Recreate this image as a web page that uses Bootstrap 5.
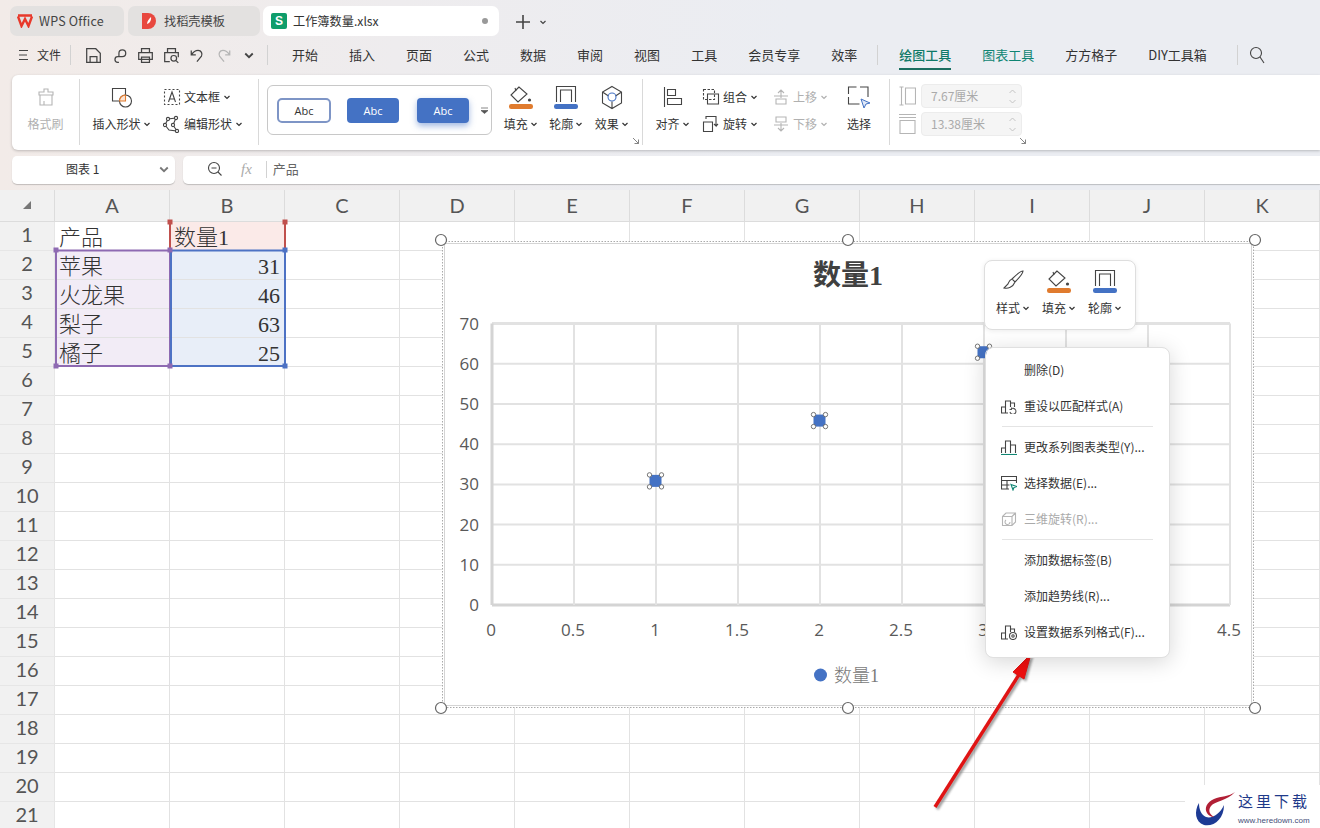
<!DOCTYPE html>
<html lang="zh-CN">
<head>
    <meta charset="UTF-8">
    <title>工作簿数量.xlsx</title>
    <link href="https://cdn.jsdelivr.net/npm/bootstrap@5.3.0/dist/css/bootstrap.min.css" rel="stylesheet">
    <style>
        html, body { height: 828px; overflow: hidden; }
        body {
            width: 1320px;
            font-family: "Noto Sans CJK SC", "Liberation Sans", sans-serif;
            font-size: 12px;
            color: #333;
            background: linear-gradient(90deg, #f2ebe8 0%, #eeecee 30%, #ebedf2 60%, #ebedf2 100%);
        }
        svg { display: block; flex: none; }
        .ic { fill: none; stroke: #444; stroke-width: 1.1; }
        .ic-off { fill: none; stroke: #b5b5b5; stroke-width: 1.1; }

        /* title tabs */
        .tabbar { height: 38px; padding: 6px 0 0 10px; }
        .wtab { height: 30px; border-radius: 7px; background: #e3e1e0; margin-right: 4px; font-size: 12.2px; color: #444; padding-left: 7px; }
        .wtab-a { width: 114px; font-size: 12.5px; letter-spacing: .2px; }
        .wtab-a span { margin-left: 2px; }
        .wtab-b { width: 132px; padding-left: 14px; }
        .wtab-c { width: 236px; background: #fff; color: #333; margin-left: -1px; padding: 0 8px 0 8px; }
        .wtab-c > span { margin-left: 2px; }
        .sheet-badge { width: 16px; height: 16px; border-radius: 2px; background: #0f9d6b; color: #fff; font-size: 12px; font-weight: 700; line-height: 16px; text-align: center; font-family: "Liberation Sans", sans-serif; }
        .tab-dot { width: 6px; height: 6px; border-radius: 50%; background: #999; margin-left: auto; margin-right: 3px; }
        .tab-add { margin-left: 12px; }

        /* menu row */
        .menubar { height: 37px; padding: 0 0 3px 18px; font-size: 13px; color: #333; }
        .vbar { width: 1px; height: 20px; background: #d2d2d2; flex: none; }
        .quick { width: 26px; display: flex; justify-content: center; }
        .quick svg { width: 17px; height: 17px; }
        .quick svg.quick-chev { width: 12px; height: 12px; color: #444; }
        .mtab { margin-right: 31px; position: relative; white-space: nowrap; }
        .mtab-on { color: #0f7a68; font-weight: 500; }
        .mtab-on::after { content: ""; position: absolute; left: 0; right: 0; bottom: -5px; height: 2px; background: #1a6e5f; }
        .mtab-tool { color: #0f8573; }

        /* ribbon */
        .ribbon { height: 75px; margin-left: 12px; padding: 4px 0; background: #fff; border-radius: 6px 0 0 6px; box-shadow: 0 1px 3px rgba(0, 0, 0, .22); }
        .rgroup { height: 66px; padding-top: 5px; border-right: 1px solid #d9d9d9; position: relative; flex: none; }
        .rgroup-1 { width: 68px; }
        .rgroup-2 { width: 179px; }
        .rgroup-4 { width: 145px; margin-left: 6px; }
        .rgroup-5 { width: 247px; }
        .stack { display: flex; flex-direction: column; align-items: center; flex: none; }
        .stack > div { height: 27px; display: flex; align-items: center; justify-content: center; gap: 2px; white-space: nowrap; }
        .stack > div:first-child { height: 26px; }
        .rrow { height: 27px; display: flex; align-items: center; gap: 3px; white-space: nowrap; }
        .rrows { margin-top: -1px; }
        .off-text { color: #b0b0b0; }
        .launcher { position: absolute; right: 2px; bottom: 0; }
        .launcher-size { right: auto; left: 129px; }
        .gallery { width: 225px; height: 50px; margin: 6px 0 0 8px; border: 1px solid #c8c8c8; border-radius: 6px; padding-left: 9px; flex: none; position: relative; }
        .gbtn { height: 25px; border-radius: 4px; font-size: 11px; line-height: 23px; text-align: center; font-family: "Open Sans", sans-serif; }
        .gbtn-1 { width: 54px; border: 2px solid #7e95c6; line-height: 21px; color: #333; background: #fff; margin-right: 16px; border-radius: 5px; }
        .gbtn-2 { width: 52px; line-height: 25px; background: #4472c4; color: #fff; margin-right: 18px; }
        .gbtn-3 { width: 52px; line-height: 25px; background: #4472c4; color: #fff; box-shadow: 0 3px 6px rgba(68, 114, 196, .5); }
        .gal-more { position: absolute; right: 2px; top: 20px; }
        .sizegroup { width: 140px; padding: 5px 0 0 9px; border: 0; }
        .sizerow { height: 24px; }
        .numbox { width: 101px; height: 24px; margin-left: 5px; background: #f5f5f5; border: 1px solid #ececec; border-radius: 4px; padding: 0 3px 0 9px; color: #aaa; font-size: 12px; flex: none; }

        /* formula row */
        .fbar { height: 40px; padding: 6px 0 0 12px; }
        .namebox { width: 163px; height: 28px; background: #fff; border-radius: 5px; box-shadow: 0 1px 1px rgba(0, 0, 0, .2); margin-right: 8px; padding: 0 5px 2px 54px; }
        .formula { flex: 1; height: 28px; background: #fff; border-radius: 5px 0 0 5px; box-shadow: 0 1px 1px rgba(0, 0, 0, .2); color: #666; font-size: 13px; padding: 0 0 2px 24px; }
        .fx { font-family: "Liberation Serif", serif; font-style: italic; color: #aaa; font-size: 15px; margin: 0 5px 0 18px; }
        .fx-bar { height: 17px; margin: 0 6px 0 9px; }

        /* grid */
        .sheet { position: relative; height: 638px; background: #fff; overflow: hidden; }
        .grid-table { table-layout: fixed; width: 1320px; margin-left: -1px; border-collapse: collapse; }
        .grid-table th, .grid-table td { border: 1px solid #e2e2e2; padding: 0; overflow: hidden; white-space: nowrap; }
        .grid-table thead th { height: 31px; background: #f1f1f1; border-color: #dcdcdc; border-top: 0; text-align: center; font: 400 20px "Lato", sans-serif; color: #555; }
        .grid-table tbody th { height: 29px; padding-bottom: 4px; background: #f1f1f1; border-color: #e6e6e6; text-align: center; font: 400 20px "Lato", sans-serif; color: #555; }
        .grid-table td { font-family: "Liberation Serif", "Noto Sans CJK SC", serif; font-size: 22px; font-weight: 300; line-height: 25px; color: #333; padding: 3px 4px 0; }
        .cell-a { background: #f2ecf6; }
        .cell-b { background: #e8eef8; }
        .cell-h { background: #fbeae8; }
        .overlay { position: absolute; left: 0; top: 0; }

        /* floating bar and menu */
        .minibar { position: absolute; left: 984px; top: 70px; width: 152px; height: 70px; background: #fff; border: 1px solid #dedede; border-radius: 8px; box-shadow: 0 1px 5px rgba(0, 0, 0, .08); padding: 6px 5px 0; }
        .minibar .stack { width: 46px; }
        .minibar .stack > div:first-child { height: 28px; }
        .minibar .stack > div:last-child { height: 26px; }
        .ctx.dropdown-menu { position: absolute; left: 985px; top: 157px; width: 185px; height: 311px; padding: 4px 0 0; border: 1px solid #e0e0e0; border-radius: 8px; box-shadow: 0 4px 22px rgba(0, 0, 0, .16); font-size: 12px; display: block; }
        .ctx .dropdown-item { height: 36.3px; padding: 0 0 0 15px; display: flex; align-items: center; gap: 7px; color: #333; font-size: 12px; white-space: nowrap; }
        .ctx .dropdown-item.disabled { color: #aaa; }
        .ctx .dropdown-divider { margin: 1.5px 16px 1.5px 16px; border-color: #e4e4e4; height: 1px; }
        .ico-slot { width: 16px; height: 16px; flex: none; }
        .mark-white { position: absolute; left: 1185px; top: 595px; width: 135px; height: 43px; background: #fff; }
        .mark-name { position: absolute; left: 1238px; top: 602px; font-size: 15px; letter-spacing: 3px; line-height: 18px; color: #1f3a8a; white-space: nowrap; }
        .mark-url { position: absolute; left: 1238px; top: 625px; font: 8px/11px "Liberation Sans", sans-serif; color: #444e78; white-space: nowrap; }
    </style>
</head>
<body>
    <svg width="0" height="0" class="position-absolute">
        <symbol id="chev" viewBox="0 0 8 8"><path d="M1.5 3 4 5.5 6.5 3" fill="none" stroke="currentColor" stroke-width="1.2"/></symbol>
        <symbol id="corner" viewBox="0 0 8 8"><path d="M1 1 6.5 6.5M6.5 2.500v4h-4" fill="none" stroke="#777" stroke-width=".9"/></symbol>
        <symbol id="fill" viewBox="0 0 26 25"><g fill="none" stroke="#444" stroke-width="1.1"><path d="M11 2 3 10l7 7 9-8z"/><path d="M8 6l-1-3"/></g><circle cx="21.5" cy="15" r="1.6" fill="#444"/><rect x="1" y="19" width="24" height="5" rx="2.2" fill="#e07b2e"/></symbol>
        <symbol id="line" viewBox="0 0 26 25"><g fill="none" stroke="#444" stroke-width="1.1"><path d="M3.500 17V1.500h19V17"/><path d="M7.500 17V5h11v12"/></g><rect x="1" y="19" width="24" height="5" rx="2.2" fill="#4472c4"/></symbol>
    </svg>

    <div class="tabbar d-flex">
        <div class="wtab wtab-a d-flex align-items-center gap-1">
            <svg width="16" height="14" viewBox="0 0 16 14"><path d="M1 2.500 4.500 12 8 5l3.500 7L15 2.500M1 1.500h14" fill="none" stroke="#e8392b" stroke-width="2.400"/></svg>
            <span>WPS Office</span>
        </div>
        <div class="wtab wtab-b d-flex align-items-center gap-2">
            <svg width="14" height="16" viewBox="0 0 14 16"><path d="M0 0h6a8 8 0 0 1 0 16H0z" fill="#e8483f"/><path d="M5 11c0-3 2-5 4-7 .5 3-1 6-4 7z" fill="#fff"/></svg>
            <span>找稻壳模板</span>
        </div>
        <div class="wtab wtab-c d-flex align-items-center gap-1">
            <div class="sheet-badge">S</div>
            <span>工作簿数量.xlsx</span>
            <div class="tab-dot"></div>
        </div>
        <div class="tab-add d-flex align-items-center" style="color:#444">
            <svg width="16" height="16" viewBox="0 0 16 16"><path d="M8 1v14M1 8h14" stroke="#444" stroke-width="1.600"/></svg>
            <svg class="ms-2" width="8" height="8"><use href="#chev"/></svg>
        </div>
    </div>

    <div class="menubar d-flex align-items-center">
        <svg width="11" height="12" viewBox="0 0 11 12" class="me-1"><path d="M1 1.500h9M1 6h8M1 10.500h9" stroke="#444"/></svg>
        <span class="ms-1" style="font-size:12px">文件</span>
        <div class="vbar" style="margin:0 9px 0 9px"></div>
        <div class="quick"><svg class="ic" viewBox="0 0 15 15"><path d="M1.500 1.500h8l4 4v8h-12zM4.500 13.500v-5h6v5"/></svg></div>
        <div class="quick"><svg class="ic" viewBox="0 0 15 15"><path d="M7 8V5.500a3 3 0 1 1 3 3H6a2.500 2.500 0 1 0 0 5h1"/></svg></div>
        <div class="quick"><svg class="ic" viewBox="0 0 15 15"><path d="M4 5V1.500h7V5M1.500 11V5h12v6zM4 9h7v4.500H4z"/></svg></div>
        <div class="quick"><svg class="ic" viewBox="0 0 15 15"><path d="M4 5V1.500h7V5M6 13H1.500V5h12v4"/><circle cx="9.500" cy="10" r="2.500"/><path d="M11.500 12l2 2"/></svg></div>
        <div class="quick"><svg class="ic" viewBox="0 0 15 15"><path d="M2 3v4h4M2 7c2-3 4-4 6-4 3 0 4 3 3 5l-4 5"/></svg></div>
        <div class="quick"><svg class="ic-off" viewBox="0 0 15 15"><path d="M13 3v4H9M13 7c-2-3-4-4-6-4-3 0-4 3-3 5l4 5"/></svg></div>
        <div class="quick"><svg class="quick-chev"><use href="#chev"/></svg></div>
        <div class="vbar" style="margin:0 24px 0 5px"></div>
        <span class="mtab">开始</span><span class="mtab">插入</span><span class="mtab">页面</span><span class="mtab">公式</span><span class="mtab">数据</span><span class="mtab">审阅</span><span class="mtab">视图</span><span class="mtab">工具</span><span class="mtab">会员专享</span><span class="mtab" style="margin-right:20px">效率</span>
        <div class="vbar" style="margin-right:21px"></div>
        <span class="mtab mtab-on">绘图工具</span><span class="mtab mtab-tool">图表工具</span><span class="mtab">方方格子</span><span class="mtab" style="margin-right:30px">DIY工具箱</span>
        <div class="vbar" style="margin-right:11px"></div>
        <svg class="ic" width="16" height="18" viewBox="0 0 16 18"><circle cx="7" cy="7" r="5.500"/><path d="M11 11l4 6"/></svg>
    </div>

    <div class="ribbon d-flex">
        <div class="rgroup rgroup-1 stack">
            <div><svg class="ic-off" width="20" height="20" viewBox="0 0 20 20"><path d="M8 5V2h4v3h5v3H3V5zM4 8v10h12V8M8 18v-4"/></svg></div>
            <div class="off-text">格式刷</div>
        </div>
        <div class="rgroup rgroup-2 d-flex">
            <div class="stack" style="width:83px">
                <div><svg class="ic" width="22" height="21" viewBox="0 0 22 21"><path d="M8.500 14H1.500V1.500h13V8"/><circle cx="14.500" cy="14" r="6"/><path d="M8.500 14a6 6 0 0 1 6-6v6z" fill="#fbe3d3" stroke="#e07b2e"/></svg></div>
                <div>插入形状<svg width="8" height="8"><use href="#chev"/></svg></div>
            </div>
            <div class="rrows">
                <div class="rrow"><svg class="ic" width="18" height="18" viewBox="0 0 18 18"><path stroke-dasharray="2 2" d="M1.500 1.500h15v15h-15z"/><path d="M5.500 14 9 4l3.500 10M6.500 11h5"/></svg>文本框 <svg width="8" height="8"><use href="#chev"/></svg></div>
                <div class="rrow"><svg class="ic" width="18" height="18" viewBox="0 0 18 18"><path d="M13 3 5 4 2 10l4 5 8 1-4-6z"/><circle cx="13" cy="3" r="1.600" fill="#fff"/><circle cx="5" cy="4" r="1.600" fill="#fff"/><circle cx="2" cy="10" r="1.600" fill="#fff"/><circle cx="14" cy="16" r="1.600" fill="#fff"/><circle cx="10" cy="10" r="1.600" fill="#fff"/></svg>编辑形状 <svg width="8" height="8"><use href="#chev"/></svg></div>
            </div>
        </div>
        <div class="gallery d-flex align-items-center">
            <div class="gbtn gbtn-1">Abc</div>
            <div class="gbtn gbtn-2">Abc</div>
            <div class="gbtn gbtn-3">Abc</div>
            <svg class="gal-more" width="9" height="9" viewBox="0 0 9 9"><path d="M1 2h7M1 4.500l3.500 3 3.500-3z" fill="#555" stroke="#555" stroke-width=".7"/></svg>
        </div>
        <div class="rgroup rgroup-4 d-flex">
            <div class="stack" style="width:45.500px">
                <div><svg width="26" height="25"><use href="#fill"/></svg></div>
                <div>填充<svg width="8" height="8"><use href="#chev"/></svg></div>
            </div>
            <div class="stack" style="width:45.500px">
                <div><svg width="26" height="25"><use href="#line"/></svg></div>
                <div>轮廓<svg width="8" height="8"><use href="#chev"/></svg></div>
            </div>
            <div class="stack" style="width:45.500px">
                <div><svg class="ic" width="22" height="25" viewBox="0 0 22 25"><path d="M11 1.500 20.500 7v11L11 23.500 1.500 18V7zM1.500 7l6 4M20.500 7l-6 4M11 16.500v7"/><circle cx="11" cy="12" r="4" stroke="#4472c4"/></svg></div>
                <div>效果<svg width="8" height="8"><use href="#chev"/></svg></div>
            </div>
            <svg class="launcher" width="8" height="8"><use href="#corner"/></svg>
        </div>
        <div class="rgroup rgroup-5 d-flex">
            <div class="stack" style="width:59px">
                <div><svg class="ic" width="20" height="20" viewBox="0 0 20 20"><path d="M1.500 0v20M4.500 2.500h8v6h-8zM4.500 11.500h14v6h-14z"/></svg></div>
                <div>对齐<svg width="8" height="8"><use href="#chev"/></svg></div>
            </div>
            <div class="rrows" style="width:70px">
                <div class="rrow"><svg class="ic" width="18" height="18" viewBox="0 0 18 18"><path stroke-dasharray="2.500 1.500" d="M1.500 1.500h11v10h-11z"/><path d="M5.500 6h11v10h-11z"/></svg>组合 <svg width="8" height="8"><use href="#chev"/></svg></div>
                <div class="rrow"><svg class="ic" width="18" height="18" viewBox="0 0 18 18"><path d="M1.500 7h9v9.500h-9zM4 4V1.500h10V11l-2-2m2 2 2-2"/></svg>旋转 <svg width="8" height="8"><use href="#chev"/></svg></div>
            </div>
            <div class="rrows off-text" style="width:67px">
                <div class="rrow"><svg class="ic-off" width="18" height="18" viewBox="0 0 18 18"><path d="M2 8h14M4 11h10v5H4zM9 10V2M6 5l3-3 3 3"/></svg>上移 <svg width="8" height="8"><use href="#chev"/></svg></div>
                <div class="rrow"><svg class="ic-off" width="18" height="18" viewBox="0 0 18 18"><path d="M2 10h14M4 2h10v5H4zM9 8v8M6 13l3 3 3-3"/></svg>下移 <svg width="8" height="8"><use href="#chev"/></svg></div>
            </div>
            <div class="stack" style="width:40px">
                <div><svg width="24" height="25" viewBox="0 0 24 25"><g fill="none" stroke="#444" stroke-width="1.100"><path d="M1.500 9V2h8M13 2h8v10M1.500 12v7h11"/></g><path d="M14 14 23 18l-4 1-2 4z" fill="#dfe8f8" stroke="#4472c4"/></svg></div>
                <div>选择</div>
            </div>
        </div>
        <div class="rgroup sizegroup">
            <div class="sizerow d-flex align-items-center mb-1">
                <svg class="ic-off" width="17" height="20" viewBox="0 0 17 20"><path d="M.5 1h4M.5 19h4M2.500 1v18M6.500 2h10v16h-10z"/></svg>
                <div class="numbox d-flex align-items-center justify-content-between"><span>7.67厘米</span><svg width="11" height="17" viewBox="0 0 11 17"><path d="M2.500 5 5.500 2l3 3M2.500 12l3 3 3-3" fill="none" stroke="#c5c5c5"/></svg></div>
            </div>
            <div class="sizerow d-flex align-items-center">
                <svg class="ic-off" width="17" height="20" viewBox="0 0 17 20"><path d="M0 .5h17M0 3.500h17M1 6.500h15v13H1z"/></svg>
                <div class="numbox d-flex align-items-center justify-content-between"><span>13.38厘米</span><svg width="11" height="17" viewBox="0 0 11 17"><path d="M2.500 5 5.500 2l3 3M2.500 12l3 3 3-3" fill="none" stroke="#c5c5c5"/></svg></div>
            </div>
            <svg class="launcher launcher-size" width="8" height="8"><use href="#corner"/></svg>
        </div>
    </div>

    <div class="fbar d-flex">
        <div class="namebox d-flex align-items-center justify-content-between">
            <span>图表 1</span>
            <svg width="12" height="12" style="color:#777"><use href="#chev"/></svg>
        </div>
        <div class="formula d-flex align-items-center">
            <svg class="ic" width="16" height="16" viewBox="0 0 16 16"><circle cx="7" cy="7" r="5.500"/><path d="M4.500 7h5M11 11l3.500 3.500"/></svg>
            <span class="fx">fx</span>
            <div class="vbar fx-bar"></div>
            <span>产品</span>
        </div>
    </div>

    <div class="sheet">
        <table class="grid-table">
            <colgroup id="gridCols"></colgroup>
            <thead><tr id="gridHead"></tr></thead>
            <tbody id="gridBody"></tbody>
        </table>

        <svg class="overlay" width="1320" height="638" viewBox="0 190 1320 638" id="chartLayer">
            <!-- data range frames -->
            <g fill="none" stroke-width="2">
                <path d="M170 222v28M285 222v28" stroke="#c0504d"/>
                <path d="M56 250.500H170V366H56z" stroke="#8e6ab2"/>
                <path d="M171 250.500H285V366H171z" stroke="#4d72c4"/>
            </g>
            <g id="rangeHandles"></g>
            <!-- chart -->
            <rect x="442.500" y="241.500" width="811" height="466" fill="#fff" stroke="#aaa" stroke-dasharray="1.500 1.500"/>
            <rect x="444.500" y="243.500" width="807" height="462" fill="#fff" stroke="#d4d4d4"/>
            <text x="848" y="285" text-anchor="middle" font-family="Liberation Serif, Noto Sans CJK SC, serif" font-size="28" font-weight="700" fill="#404040">数量1</text>
            <g id="chartGrid"></g>
            <g id="chartPoints"></g>
            <circle cx="820.500" cy="675" r="6.500" fill="#4472c4"/>
            <text x="834" y="682" font-family="Liberation Serif, Noto Sans CJK SC, serif" font-size="18" font-weight="300" fill="#7a7a7a">数量1</text>
            <g fill="#fff" stroke="#666" stroke-width="1.200">
                <circle cx="441" cy="240" r="5.500"/><circle cx="848" cy="240" r="5.500"/><circle cx="1255" cy="240" r="5.500"/>
                <circle cx="441" cy="708" r="5.500"/><circle cx="848" cy="708" r="5.500"/><circle cx="1255" cy="708" r="5.500"/>
            </g>
        </svg>

        <div class="minibar d-flex">
            <div class="stack">
                <div><svg class="ic" width="24" height="24" viewBox="0 0 24 24"><path d="M22 2c-2 0-8 5-11 8l3 3c3-3 8-9 8-11zM11 10c-3 1-3 3-4 5l-4 4c4 1 9-1 11-6"/></svg></div>
                <div>样式<svg width="8" height="8"><use href="#chev"/></svg></div>
            </div>
            <div class="stack">
                <div><svg width="26" height="25"><use href="#fill"/></svg></div>
                <div>填充<svg width="8" height="8"><use href="#chev"/></svg></div>
            </div>
            <div class="stack">
                <div><svg width="26" height="25"><use href="#line"/></svg></div>
                <div>轮廓<svg width="8" height="8"><use href="#chev"/></svg></div>
            </div>
        </div>

        <div class="ctx dropdown-menu">
            <a class="dropdown-item" href="#"><span class="ico-slot"></span>删除(D)</a>
            <a class="dropdown-item" href="#"><svg class="ic ico-slot" viewBox="0 0 16 16"><path d="M.5 15V9h4v6zM4.500 9V3h5v6M9.500 5h4v4M.5 15H7"/><path d="M9 14a3 3 0 1 0 1-3M10.500 9.500v2h-2" stroke="#555"/></svg>重设以匹配样式(A)</a>
            <div class="dropdown-divider"></div>
            <a class="dropdown-item" href="#"><svg class="ic ico-slot" viewBox="0 0 16 16"><path d="M.5 14V9h4v5M4.500 14V2h5v12M9.500 14V6h5v8"/><path d="M0 15.500h16" stroke="#0f8573"/></svg>更改系列图表类型(Y)...</a>
            <a class="dropdown-item" href="#"><svg class="ic ico-slot" viewBox="0 0 16 16"><path d="M8 14H.5V1.500h15V8M.5 5.500h15M.5 10h8M6 5.500V14"/><path d="M10 9.500l5.500 2-2.500 1-1 2.500z" stroke="#0f8573"/></svg>选择数据(E)...</a>
            <a class="dropdown-item disabled" href="#"><svg class="ic-off ico-slot" viewBox="0 0 16 16"><path d="M1.500 5.500 5 2h9.500v9L11 14.500H1.500zM1.500 5.500H11v9M11 5.500 14.500 2"/><path d="M5 9a2.500 2.500 0 1 0 4 2"/></svg>三维旋转(R)...</a>
            <div class="dropdown-divider"></div>
            <a class="dropdown-item" href="#"><span class="ico-slot"></span>添加数据标签(B)</a>
            <a class="dropdown-item" href="#"><span class="ico-slot"></span>添加趋势线(R)...</a>
            <a class="dropdown-item" href="#"><svg class="ic ico-slot" viewBox="0 0 16 16"><path d="M7 15H.5V9h4v6M4.500 9V2h5v6M9.500 5h4v3"/><circle cx="12" cy="12" r="3.500"/><circle cx="12" cy="12" r="1.200"/></svg>设置数据系列格式(F)...</a>
        </div>

        <svg class="overlay" width="1320" height="638" viewBox="0 190 1320 638">
            <defs><filter id="arrowShade" x="-20%" y="-20%" width="140%" height="140%"><feGaussianBlur stdDeviation="1.200"/></filter></defs>
            <g transform="translate(2 2)" fill="#777" stroke="#777" filter="url(#arrowShade)" opacity=".7">
                <path d="M935 807 1020 673" stroke-width="3.500" fill="none"/>
                <path d="M1031 654 1013 672 1024 679z"/>
            </g>
            <path d="M935 807 1020 673" stroke="#e01414" stroke-width="3.500" fill="none"/>
            <path d="M1031 654 1013 672 1024 679z" fill="#f01010" stroke="#e01414"/>
        </svg>

        <div class="mark-white"></div>
        <svg class="overlay" width="1320" height="638" viewBox="0 190 1320 638">
            <path d="M1199 803c-5 8-4 19 5 22 10 2 20-6 20-20-4 9-12 14-18 12-5-2-7-8-7-14z" fill="#1d3a94"/>
            <path d="M1235 792c-6 5-14 4-21 7-7 3-10 9-7 14 1 2 4 4 7 4-5-3-6-7-3-11 4-5 16-5 24-14z" fill="#b11f35"/>
        </svg>
        <div class="mark-name">这里下载</div>
        <div class="mark-url">www.heredown.com</div>
    </div>

    <script>
        // spreadsheet cells
        const columns = ['A', 'B', 'C', 'D', 'E', 'F', 'G', 'H', 'I', 'J', 'K'];
        const rows = [['产品', '数量1'], ['苹果', 31], ['火龙果', 46], ['梨子', 63], ['橘子', 25]];

        document.getElementById('gridCols').innerHTML = '<col style="width:55px">' + columns.map(() => '<col style="width:115px">').join('');
        document.getElementById('gridHead').innerHTML = '<th><svg width="12" height="12" class="mx-auto" viewBox="0 0 12 12"><path d="M10 2v8H2z" fill="#777"/></svg></th>' + columns.map(c => `<th>${c}</th>`).join('');

        let body = '';
        for (let r = 0; r < 21; r++) {
            const row = rows[r] || [];
            let a = '<td></td>', b = '<td></td>';
            if (r === 0) {
                a = `<td>${row[0]}</td>`;
                b = `<td class="cell-h">${row[1]}</td>`;
            } else if (row.length) {
                a = `<td class="cell-a">${row[0]}</td>`;
                b = `<td class="cell-b text-end">${row[1]}</td>`;
            }
            body += `<tr><th>${r + 1}</th>${a}${b}${'<td></td>'.repeat(9)}</tr>`;
        }
        document.getElementById('gridBody').innerHTML = body;

        // chart: page coordinates, x 164px per unit from 492, y 4.02px per unit up from 605
        const sx = v => 492 + v * 164;
        const sy = v => 605 - v * 4.02;
        const axisFont = 'font-family="Open Sans, sans-serif" font-size="17" fill="#595959"';
        let grid = '';
        for (let v = 0; v <= 70; v += 10) {
            grid += `<path d="M${sx(0)} ${sy(v)}H${sx(4.5)}" stroke="${v ? '#e2e2e2' : '#d4d4d4'}" stroke-width="${v === 70 || !v ? 3 : 2}"/>`;
            grid += `<text x="479" y="${sy(v) + 6}" text-anchor="end" ${axisFont}>${v}</text>`;
        }
        for (let v = 0; v <= 4.5; v += 0.5) {
            grid += `<path d="M${sx(v)} ${sy(70)}V${sy(0)}" stroke="${v ? '#e2e2e2' : '#d4d4d4'}" stroke-width="${v ? 2 : 3}"/>`;
            // 3.5 and 4 sit under the context menu
            if (v !== 3.5 && v !== 4) {
                grid += `<text x="${sx(v) - 1}" y="636" text-anchor="middle" ${axisFont}>${v}</text>`;
            }
        }
        document.getElementById('chartGrid').innerHTML = grid;

        let points = '';
        [[1, 31], [2, 46], [3, 63]].forEach(([x, y]) => {
            const px = sx(x) - 0.5, py = sy(y) + 0.5;
            points += `<rect x="${px - 6}" y="${py - 6}" width="12" height="12" fill="#4472c4"/>`;
            [[-6, -6], [6, -6], [-6, 6], [6, 6]].forEach(([dx, dy]) => {
                points += `<circle cx="${px + dx}" cy="${py + dy}" r="2.200" fill="#fff" stroke="#666" stroke-width=".9"/>`;
            });
        });
        document.getElementById('chartPoints').innerHTML = points;

        let handles = '';
        [[56, 250, '#8e6ab2'], [170, 250, '#8e6ab2'], [56, 366, '#8e6ab2'], [170, 366, '#8e6ab2'], [285, 250, '#4d72c4'], [285, 366, '#4d72c4'], [170, 222, '#c0504d'], [285, 222, '#c0504d']].forEach(([x, y, c]) => {
            handles += `<rect x="${x - 2.500}" y="${y - 2.500}" width="5" height="5" fill="${c}"/>`;
        });
        document.getElementById('rangeHandles').innerHTML = handles;
    </script>
    <script src="https://cdn.jsdelivr.net/npm/bootstrap@5.3.0/dist/js/bootstrap.bundle.min.js"></script>
</body>
</html>
